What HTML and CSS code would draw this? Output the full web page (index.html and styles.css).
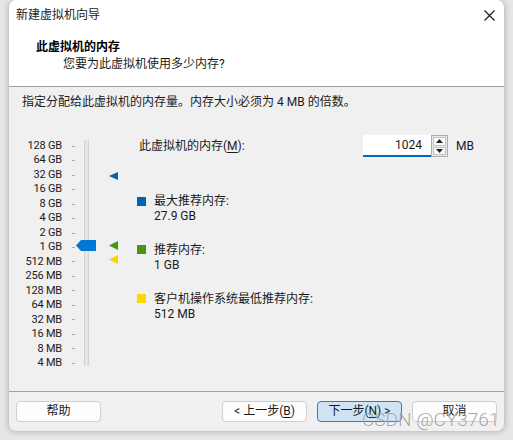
FILE: index.html
```html
<!DOCTYPE html>
<html lang="zh-CN">
<head>
<meta charset="utf-8">
<title>新建虚拟机向导</title>
<link rel="stylesheet" href="styles.css">
</head>
<body>
<div class="window">
  <header class="header">
    <div class="titlebar">
      <span class="title">新建虚拟机向导</span>
      <svg class="close" width="11" height="11" viewBox="0 0 11 11"><path d="M0.5 0.5 L10.5 10.5 M10.5 0.5 L0.5 10.5" stroke="#1a1a1a" stroke-width="1.1" fill="none"/></svg>
    </div>
    <div class="heading">此虚拟机的内存</div>
    <div class="subheading">您要为此虚拟机使用多少内存?</div>
  </header>
  <main class="body">
    <p class="desc">指定分配给此虚拟机的内存量。内存大小必须为 4 MB 的倍数。</p>
    <div class="main">
      <div class="slider">
        <div class="scale">
          <div class="row"><span class="lbl">128 GB</span><span class="tick"></span></div>
          <div class="row"><span class="lbl">64 GB</span><span class="tick"></span></div>
          <div class="row"><span class="lbl">32 GB</span><span class="tick"></span></div>
          <div class="row"><span class="lbl">16 GB</span><span class="tick"></span></div>
          <div class="row"><span class="lbl">8 GB</span><span class="tick"></span></div>
          <div class="row"><span class="lbl">4 GB</span><span class="tick"></span></div>
          <div class="row"><span class="lbl">2 GB</span><span class="tick"></span></div>
          <div class="row"><span class="lbl">1 GB</span><span class="tick"></span></div>
          <div class="row"><span class="lbl">512 MB</span><span class="tick"></span></div>
          <div class="row"><span class="lbl">256 MB</span><span class="tick"></span></div>
          <div class="row"><span class="lbl">128 MB</span><span class="tick"></span></div>
          <div class="row"><span class="lbl">64 MB</span><span class="tick"></span></div>
          <div class="row"><span class="lbl">32 MB</span><span class="tick"></span></div>
          <div class="row"><span class="lbl">16 MB</span><span class="tick"></span></div>
          <div class="row"><span class="lbl">8 MB</span><span class="tick"></span></div>
          <div class="row"><span class="lbl">4 MB</span><span class="tick"></span></div>
        </div>
        <div class="track"></div>
        <svg class="thumb" width="20" height="11" viewBox="0 0 20 11"><path d="M0 5.5 L5 0 H20 V11 H5 Z" fill="#0078d4"/></svg>
        <svg class="mark mark-max" width="9" height="8" viewBox="0 0 9 8"><path d="M0 4 L9 0 V8 Z" fill="#0063b1"/></svg>
        <svg class="mark mark-rec" width="9" height="9" viewBox="0 0 9 9"><path d="M0 4.5 L9 0 V9 Z" fill="#4a9413"/></svg>
        <svg class="mark mark-min" width="9" height="9" viewBox="0 0 9 9"><path d="M0 4.5 L9 0 V9 Z" fill="#fcd500"/></svg>
      </div>
      <div class="right">
        <div class="memrow">
          <span class="memlabel">此虚拟机的内存(<u>M</u>):</span>
          <span class="input">1024</span>
          <span class="spin">
            <span class="spinbtn"><svg width="7" height="4" viewBox="0 0 7 4"><path d="M0 4 L3.5 0 L7 4 Z" fill="#222"/></svg></span>
            <span class="spinbtn"><svg width="7" height="4" viewBox="0 0 7 4"><path d="M0 0 L3.5 4 L7 0 Z" fill="#222"/></svg></span>
          </span>
          <span class="unit">MB</span>
        </div>
        <div class="legend">
          <div class="item"><span class="sq sq-max"></span><div class="itext"><div>最大推荐内存:</div><div>27.9 GB</div></div></div>
          <div class="item"><span class="sq sq-rec"></span><div class="itext"><div>推荐内存:</div><div>1 GB</div></div></div>
          <div class="item"><span class="sq sq-min"></span><div class="itext"><div>客户机操作系统最低推荐内存:</div><div>512 MB</div></div></div>
        </div>
      </div>
    </div>
  </main>
  <footer class="footer">
    <button class="btn">帮助</button>
    <div class="navbtns">
      <button class="btn">&lt; 上一步(<u>B</u>)</button>
      <button class="btn btn-default">下一步(<u>N</u>) &gt;</button>
      <button class="btn">取消</button>
    </div>
  </footer>
</div>
<div class="watermark">CSDN @CY3761</div>
</body>
</html>
```

FILE: styles.css
```css
* { box-sizing: border-box; }
html, body { margin: 0; padding: 0; }
body {
  width: 513px;
  height: 440px;
  background: #e7e7e7;
  font-family: Roboto, "Noto Sans CJK SC", sans-serif;
  font-size: 12px;
  color: #1a1a1a;
  position: relative;
  overflow: hidden;
}
.window {
  margin-left: 8px;
  width: 497px;
  height: 432px;
  border-radius: 8px;
  overflow: hidden;
  background: #f0f0f0;
  box-shadow: 0 0 6px rgba(0,0,0,0.22);
  border: 1px solid #c9c9c9;
  border-top: none;
  display: flex;
  flex-direction: column;
}
.header {
  height: 87px;
  background: #fff;
  border-bottom: 1px solid #a0a0a0;
  padding-top: 7px;
  flex: none;
}
.titlebar {
  display: flex;
  justify-content: space-between;
  align-items: center;
  padding: 0 9px 0 7px;
  height: 16px;
  line-height: 16px;
}
.close { display: block; }
.heading {
  margin-top: 16px;
  padding-left: 27px;
  font-weight: bold;
  line-height: 16px;
  color: #000;
}
.subheading {
  margin-top: 1px;
  padding-left: 54px;
  line-height: 16px;
}
.body {
  height: 305px;
  border-bottom: 1px solid #a0a0a0;
  padding: 7px 0 0 13px;
  flex: none;
}
.desc {
  margin: 0;
  line-height: 16px;
}
.main {
  display: flex;
  margin-top: 25px;
}
.slider {
  position: relative;
  width: 114px;
  padding-top: 4px;
  display: flex;
  flex: none;
}
.scale { display: flex; flex-direction: column; }
.row {
  display: flex;
  align-items: center;
  height: 14.47px;
  line-height: 14.47px;
}
.lbl {
  width: 40px;
  text-align: right;
  font-size: 11px;
  letter-spacing: -0.2px;
  color: #1a1a1a;
}
.tick {
  width: 3px;
  height: 1px;
  background: #a8a8a8;
  margin-left: 10px;
}
.track {
  margin-left: 9px;
  margin-top: 1px;
  width: 5px;
  height: 226px;
  background: #e6e6e6;
  border-left: 1px solid #d4d4d4;
  border-right: 1px solid #d4d4d4;
}
.thumb { position: absolute; left: 54px; top: 105px; }
.mark { position: absolute; left: 87px; }
.mark-max { top: 36.7px; }
.mark-rec { top: 105.7px; }
.mark-min { top: 120px; }
.right {
  flex: 1;
  padding-left: 1px;
}
.memrow {
  display: flex;
  align-items: center;
  height: 22px;
}
.memlabel {
  width: 226px;
  padding-left: 2px;
  line-height: 16px;
}
.memlabel u, .btn u { text-decoration: underline; text-underline-offset: 2px; }
.input {
  width: 68px;
  height: 22px;
  background: #fff;
  border-bottom: 2px solid #0067c0;
  text-align: right;
  padding-right: 9px;
  line-height: 21px;
  font-size: 12px;
}
.spin {
  width: 17px;
  height: 22px;
  border: 1px solid #adadad;
  background: #e9e9e9;
  display: flex;
  flex-direction: column;
  padding: 1px;
  gap: 1px;
}
.spinbtn {
  flex: 1;
  background: #fbfbfb;
  border: 1px solid #c4c4c4;
  display: flex;
  align-items: center;
  justify-content: center;
}
.spinbtn svg { display: block; }
.unit { margin-left: 8px; line-height: 16px; }
.legend {
  margin-top: 37.2px;
  display: flex;
  flex-direction: column;
  gap: 18.7px;
}
.item { display: flex; align-items: flex-start; }
.sq {
  width: 9px;
  height: 9px;
  margin-top: 2.5px;
  margin-right: 8px;
  flex: none;
}
.sq-max { background: #0063b1; }
.sq-rec { background: #4a9413; }
.sq-min { background: #fcd800; }
.itext { line-height: 15px; }
.footer {
  flex: 1;
  display: flex;
  justify-content: space-between;
  padding: 9px 7px 0 7px;
}
.navbtns { display: flex; gap: 10px; }
.btn {
  width: 85px;
  height: 21px;
  padding: 0;
  font: inherit;
  font-size: 12px;
  color: #1a1a1a;
  background: #fdfdfd;
  border: 1px solid #cfcfcf;
  border-radius: 4px;
  line-height: 19px;
}
.btn-default {
  background: #cfe3f5;
  border-color: #2a7fcf;
}
.watermark {
  position: absolute;
  left: 362px;
  top: 408px;
  font-family: Roboto, sans-serif;
  font-weight: 300;
  font-size: 19px;
  color: rgba(105,105,105,0.6);
  text-shadow: 0 0 1px rgba(255,255,255,0.8);
  white-space: nowrap;
}
```
